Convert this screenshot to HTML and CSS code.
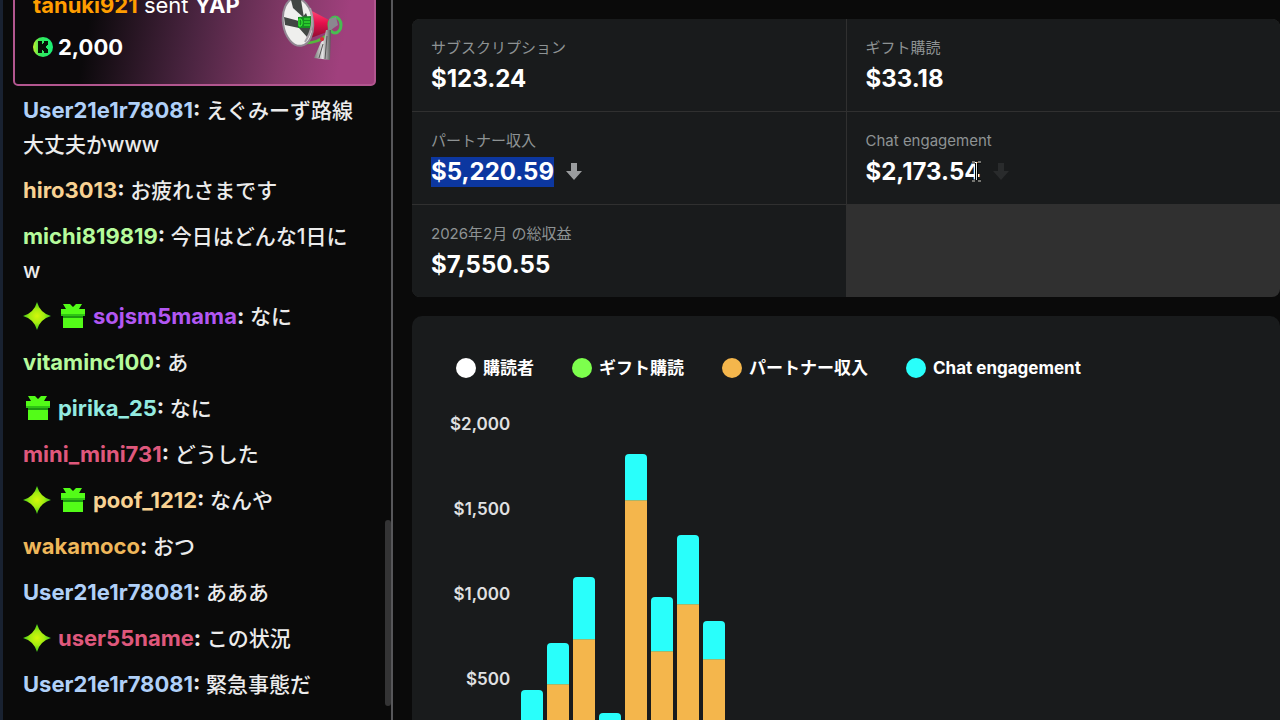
FILE: index.html
```html
<!DOCTYPE html>
<html lang="ja">
<head>
<meta charset="utf-8">
<title>収益ダッシュボード</title>
<link rel="stylesheet" href="styles.css">
</head>
<body>
<svg class="defs" aria-hidden="true">
  <defs>
    <radialGradient id="star-fill"><stop offset="0" stop-color="#d4f80a"/><stop offset=".5" stop-color="#a5ec10"/><stop offset="1" stop-color="#37c81c"/></radialGradient>
    <symbol id="star" viewBox="0 0 28 28"><path d="M14 0Q17 11 28 14Q17 17 14 28Q11 17 0 14Q11 11 14 0Z" fill="url(#star-fill)"/></symbol>
    <symbol id="gift" viewBox="0 0 28 28"><path d="M5 2H12L15 5L18 2H24L21 7H27V14H25V26H5V14H3V7H8Z" fill="#53fc18"/><path d="M5 14H25V16H5Z" fill="#1d9a10"/><path d="M3 12H27V14H3Z" fill="#2fc414"/></symbol>
    <symbol id="arrow" viewBox="0 0 16 18"><path d="M5 0H11V8H16L8 17L0 8H5Z" fill="currentColor"/></symbol>
  </defs>
</svg>
<div class="app">
  <aside class="chat">
    <section class="gift-card">
      <div>
        <p class="gift-line"><b class="c-orange">tanuki921</b> sent <b>YAP</b></p>
        <p class="gift-line amount">
          <svg class="coin" viewBox="0 0 20 20" aria-hidden="true">
            <defs><linearGradient id="coin-fill"><stop offset="0" stop-color="#c8f02c"/><stop offset=".35" stop-color="#35e85a"/><stop offset="1" stop-color="#18f078"/></linearGradient></defs>
            <circle cx="10" cy="10" r="10" fill="url(#coin-fill)"/>
            <path d="M5 4H9V7H10V6H11V4H15V8H14V9H13V11H14V12H15V16H11V14H10V13H9V16H5Z" fill="#071008"/>
          </svg>
          <b>2,000</b>
        </p>
      </div>
      <svg class="megaphone" viewBox="0 0 64 68" aria-hidden="true">
        <defs>
          <linearGradient id="horn" x2="0" y2="1"><stop offset="0" stop-color="#ff4a76"/><stop offset=".45" stop-color="#e60f4c"/><stop offset="1" stop-color="#86102f"/></linearGradient>
          <linearGradient id="metal"><stop offset="0" stop-color="#777"/><stop offset=".5" stop-color="#e2e2e2"/><stop offset="1" stop-color="#555"/></linearGradient>
        </defs>
        <path d="M26 47Q39 47 48 39" fill="none" stroke="#55b83c" stroke-width="3"/>
        <path d="M31 14L50 24L48 36L29 43Z" fill="url(#horn)"/>
        <ellipse cx="56" cy="29" rx="6" ry="8" fill="none" stroke="#48bd51" stroke-width="3"/>
        <path d="M50 23L57 21L59 29L49 36Z" fill="#8b8790"/>
        <path d="M47 34L52 34L51 64L35 62L42 46L45 44Z" fill="url(#metal)"/>
        <path d="M44 48L40 62M48 40L46 63" stroke="#555" stroke-width="1"/>
        <circle cx="43" cy="43" r="2" fill="#e02c35"/>
        <ellipse cx="19" cy="26" rx="15" ry="24" fill="#efefed" stroke="#918893" stroke-width="2" transform="rotate(-8 19 26)"/>
        <path d="M12 4L22 4L25 22L14 12Z" fill="#414743"/>
        <path d="M5 21L20 25L27 17L33 33L28 41L20 32L6 29Z" fill="#424744"/>
        <path d="M19 21L32 20V32H19Z" fill="#168f21"/>
        <path d="M20 23V30H22L23 28V25L22 23ZM25 23H31M25 26H31M25 29H31" fill="none" stroke="#3cff37" stroke-width="1"/>
        <path d="M31 12Q37 29 26 46" fill="none" stroke="#aaa2a9" stroke-width="2"/>
      </svg>
    </section>
    <div class="messages">
      <p class="message"><b class="c-blue">User21e1r78081</b><b>:</b> えぐみーず路線大丈夫かwww</p>
      <p class="message"><b class="c-sand">hiro3013</b><b>:</b> お疲れさまです</p>
      <p class="message"><b class="c-lime">michi819819</b><b>:</b> 今日はどんな1日に w</p>
      <p class="message"><svg class="badge"><use href="#star"/></svg><svg class="badge"><use href="#gift"/></svg><b class="c-purple">sojsm5mama</b><b>:</b> なに</p>
      <p class="message"><b class="c-lime">vitaminc100</b><b>:</b> あ</p>
      <p class="message"><svg class="badge"><use href="#gift"/></svg><b class="c-mint">pirika_25</b><b>:</b> なに</p>
      <p class="message"><b class="c-rose">mini_mini731</b><b>:</b> どうした</p>
      <p class="message"><svg class="badge"><use href="#star"/></svg><svg class="badge"><use href="#gift"/></svg><b class="c-sand">poof_1212</b><b>:</b> なんや</p>
      <p class="message"><b class="c-gold">wakamoco</b><b>:</b> おつ</p>
      <p class="message"><b class="c-blue">User21e1r78081</b><b>:</b> あああ</p>
      <p class="message"><svg class="badge"><use href="#star"/></svg><b class="c-rose">user55name</b><b>:</b> この状況</p>
      <p class="message"><b class="c-blue">User21e1r78081</b><b>:</b> 緊急事態だ</p>
    </div>
    <div class="scroll-thumb"></div>
  </aside>
  <main class="dashboard">
    <dl class="stats">
      <div class="stat"><dt>サブスクリプション</dt><dd>$123.24</dd></div>
      <div class="stat"><dt>ギフト購読</dt><dd>$33.18</dd></div>
      <div class="stat"><dt>パートナー収入</dt><dd><span class="selected">$5,220.59</span><svg class="arrow"><use href="#arrow"/></svg></dd></div>
      <div class="stat"><dt>Chat engagement</dt><dd><span class="pointed">$2,173.54<svg class="cursor" viewBox="0 0 11 21" aria-hidden="true"><path d="M1 1H4M7 1H10M5.500 2V19M1 20H4M7 20H10" stroke="#000" stroke-width="3"/><path d="M1 1H4M7 1H10M5.500 2V19M1 20H4M7 20H10" stroke="#e8e8e0" stroke-width="1"/></svg></span><svg class="arrow faded"><use href="#arrow"/></svg></dd></div>
      <div class="stat"><dt>2026年2月 の総収益</dt><dd>$7,550.55</dd></div>
    </dl>
    <section class="chart-card">
      <ul class="legend">
        <li><i class="dot dot-white"></i>購読者</li>
        <li><i class="dot dot-green"></i>ギフト購読</li>
        <li><i class="dot dot-gold"></i>パートナー収入</li>
        <li><i class="dot dot-cyan"></i>Chat engagement</li>
      </ul>
      <div class="chart">
        <div class="axis"><span>$2,000</span><span>$1,500</span><span>$1,000</span><span>$500</span><span>$0</span></div>
        <div class="plot">
          <div class="bar" style="height:73px"><i style="height:41px"></i></div>
          <div class="bar" style="height:120px"><i style="height:79px"></i></div>
          <div class="bar" style="height:186px"><i style="height:124px"></i></div>
          <div class="bar" style="height:50px"><i style="height:30px"></i></div>
          <div class="bar" style="height:309px"><i style="height:263px"></i></div>
          <div class="bar" style="height:166px"><i style="height:112px"></i></div>
          <div class="bar" style="height:228px"><i style="height:159px"></i></div>
          <div class="bar" style="height:142px"><i style="height:104px"></i></div>
        </div>
      </div>
    </section>
  </main>
</div>
</body>
</html>
```
FILE: styles.css
```css
* { box-sizing: border-box; }
body {
  margin: 0;
  background: #0a0a0a;
  color: #fff;
  font-family: Inter, "Noto Sans CJK JP", sans-serif;
}
p, dl, dd, ul { margin: 0; padding: 0; }
.defs { position: absolute; width: 0; height: 0; }
.app { display: flex; height: 100vh; overflow: hidden; }

.chat {
  position: relative;
  flex: 0 0 393px;
  display: flex;
  flex-direction: column;
  justify-content: flex-end;
  padding: 0 15px 12px 10px;
  border-left: 3px solid #192231;
  border-right: 2px solid #57575a;
  font-size: 22px;
  line-height: 34px;
}
.gift-card {
  flex: none;
  display: flex;
  justify-content: space-between;
  align-items: flex-end;
  margin-bottom: 2px;
  padding: 20px 31px 20px 18px;
  border: 2px solid #b2568f;
  border-radius: 5px;
  background: linear-gradient(100deg, #0b090b 22%, #4a2440 50%, #823967 74%, #a0407d 90%);
}
.gift-line + .gift-line { margin-top: 8px; }
.amount { display: flex; align-items: center; gap: 5px; }
.coin { width: 20px; height: 20px; }
.megaphone { width: 64px; height: 68px; }
.messages { padding: 0 12px 0 10px; }
.message { padding: 6px 0; color: #ececec; font-size: 21px; font-weight: 500; }
.message b { font-size: 22px; font-weight: 700; line-height: 30px; }
.badge { width: 28px; height: 28px; margin-right: 7px; vertical-align: -6px; }
.scroll-thumb {
  position: absolute;
  right: 0;
  bottom: 14px;
  width: 6px;
  height: 186px;
  border-radius: 3px;
  background: #343435;
}
.c-orange { color: #ff9d00; }
.c-blue { color: #b0d0f8; }
.c-sand { color: #f8d293; }
.c-lime { color: #b6fb9c; }
.c-purple { color: #b257f2; }
.c-mint { color: #93ebe0; }
.c-rose { color: #df587c; }
.c-gold { color: #efb75a; }

.dashboard { flex: 1; min-width: 0; padding: 19px 0 0 19px; }
.stats {
  display: grid;
  grid-template-columns: 1fr 1fr;
  gap: 1px;
  overflow: hidden;
  border-radius: 8px;
  background: #303030;
}
.stat { padding: 18px 19px 12px; background: #191b1c; }
dt { color: #8e9394; font-size: 15px; line-height: 22px; }
dd {
  display: flex;
  align-items: center;
  height: 40px;
  gap: 12px;
  font-size: 24px;
  font-weight: 700;
  line-height: 30px;
}
.selected { background: #0c37a0; }
.pointed { position: relative; }
.cursor { position: absolute; right: -1px; top: 4px; width: 11px; height: 21px; }
.arrow { width: 16px; height: 18px; color: #9a9c9e; }
.faded { color: #292b2c; }

.chart-card {
  margin-top: 19px;
  padding: 38px 38px 40px;
  border-radius: 10px;
  background: #191b1c;
}
.legend {
  display: flex;
  gap: 38px;
  padding-left: 6px;
  list-style: none;
  font-size: 17px;
  font-weight: 700;
  line-height: 28px;
}
.legend li { display: flex; align-items: center; gap: 7px; }
.dot { width: 20px; height: 20px; border-radius: 50%; }
.dot-white { background: #fff; }
.dot-green { background: #7dff4d; }
.dot-gold { background: #f4b64c; }
.dot-cyan { background: #29fffb; }
.chart { display: flex; gap: 11px; margin-top: 30px; }
.axis {
  display: grid;
  grid-auto-rows: 85px;
  min-width: 60px;
  color: #e0e1e2;
  font-size: 17px;
  font-weight: 600;
  line-height: 24px;
  text-align: right;
}
.plot {
  display: flex;
  align-items: flex-end;
  gap: 4px;
  height: 340px;
  margin-top: 11px;
}
.bar {
  display: flex;
  align-items: flex-end;
  width: 22px;
  overflow: hidden;
  border-radius: 4px 4px 0 0;
  background: #29fffb;
}
.bar i { flex: 1; border-top: 1px solid #a8b66a; background: #f4b64c; }
```
